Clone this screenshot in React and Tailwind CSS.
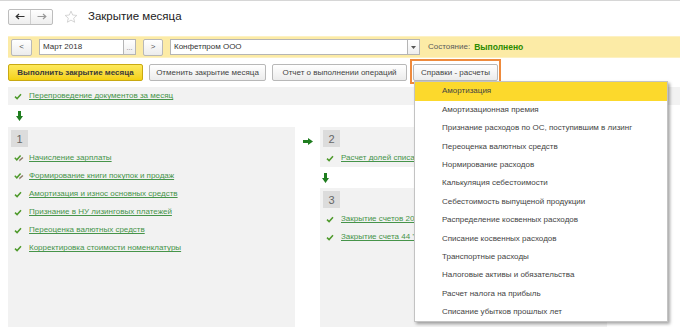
import React from 'react';

const Check = () => (
  <svg width="8" height="7" viewBox="0 0 8 7" className="shrink-0">
    <path d="M1 3.6 L3.1 5.6 L7 1.2" fill="none" stroke="#4f9a2c" strokeWidth="1.5" />
  </svg>
);

const CheckPencil = () => (
  <svg width="10" height="8" viewBox="0 0 10 8" className="shrink-0">
    <path d="M0.8 3.8 L2.8 5.8 L6.6 1.4" fill="none" stroke="#4f9a2c" strokeWidth="1.5" />
    <path d="M5 7.4 L5.6 5.6 L8.4 3 L9.4 4 L6.6 6.6 Z" fill="#8a7a66" />
  </svg>
);

const ArrowDown = () => (
  <svg width="7" height="10" viewBox="0 0 7 10">
    <path d="M2 0 H5 V5 H7 L3.5 10 L0 5 H2 Z" fill="#1f7d1f" />
  </svg>
);

const ArrowRight = () => (
  <svg width="10" height="7" viewBox="0 0 10 7">
    <path d="M0 2 H5 V0 L10 3.5 L5 7 V5 H0 Z" fill="#1f7d1f" />
  </svg>
);

const Item = ({ text, pencil }) => (
  <div className="flex items-center h-[18px]">
    <div className="w-[21px] pl-[6px] flex items-center">{pencil ? <CheckPencil /> : <Check />}</div>
    <span className="text-[8px] text-[#46944a] underline underline-offset-1 whitespace-nowrap">{text}</span>
  </div>
);

const NumBox = ({ n }) => (
  <div className="ml-[3px] mt-[3px] w-[17px] h-[17px] bg-[#dcdcdc] flex items-center justify-center text-[11px] text-[#666]">{n}</div>
);

const menu = [
  'Амортизация',
  'Амортизационная премия',
  'Признание расходов по ОС, поступившим в лизинг',
  'Переоценка валютных средств',
  'Нормирование расходов',
  'Калькуляция себестоимости',
  'Себестоимость выпущеной продукции',
  'Распределение косвенных расходов',
  'Списание косвенных расходов',
  'Транспортные расходы',
  'Налоговые активы и обязательства',
  'Расчет налога на прибыль',
  'Списание убытков прошлых лет',
];

const btn = 'h-[17px] rounded-[2px] border border-[#b8b8b8] bg-gradient-to-b from-white to-[#ececec] text-[8px] text-[#444] flex items-center justify-center shrink-0';

export default function App() {
  return (
    <div className="w-[680px] h-[327px] overflow-hidden bg-white text-[#333] font-['Liberation_Sans',Arial,sans-serif]">
      <div className="h-px bg-[#d6d6d6]" />

      {/* header */}
      <div className="flex items-center pl-2 pt-[7px]">
        <div className="flex h-[16px] border border-[#bdbdbd] rounded-[2px] bg-gradient-to-b from-white to-[#eeeeee]">
          <div className="w-[22px] flex items-center justify-center border-r border-[#cfcfcf]">
            <svg width="10" height="7" viewBox="0 0 10 7"><path d="M9.5 3.5 H1.5 M4 1 L1.2 3.5 L4 6" fill="none" stroke="#333" strokeWidth="1.2" /></svg>
          </div>
          <div className="w-[21px] flex items-center justify-center">
            <svg width="10" height="7" viewBox="0 0 10 7"><path d="M0.5 3.5 H8.5 M6 1 L8.8 3.5 L6 6" fill="none" stroke="#999" strokeWidth="1.2" /></svg>
          </div>
        </div>
        <svg width="14" height="14" viewBox="0 0 24 24" className="ml-[11px]">
          <path d="M12 2 L14.9 8.6 L22 9.3 L16.6 14 L18.2 21 L12 17.3 L5.8 21 L7.4 14 L2 9.3 L9.1 8.6 Z" fill="none" stroke="#c8c8c8" strokeWidth="1.3" strokeLinejoin="round" />
        </svg>
        <span className="ml-[10px] text-[11.5px] text-[#222]">Закрытие месяца</span>
      </div>

      {/* yellow bar */}
      <div className="ml-2 mt-[11px] h-[22px] bg-[#fcebA6] border-y border-[#fdf1c2] flex items-center pl-[3px]">
        <div className={`${btn} w-[21px] h-[16px] text-[#555]`}>&lt;</div>
        <div className="ml-[7px] flex h-[16px]">
          <div className="w-[85px] bg-white border border-[#b5b5b5] flex items-center pl-[3px] text-[8px] text-[#333]">Март 2018</div>
          <div className="w-[12px] bg-gradient-to-b from-white to-[#eee] border border-l-0 border-[#b5b5b5] flex items-end justify-center pb-[3px] text-[7px] leading-none text-[#777]">...</div>
        </div>
        <div className={`${btn} ml-[7px] w-[20px] h-[16px] text-[#555]`}>&gt;</div>
        <div className="ml-[7px] flex h-[16px]">
          <div className="w-[238px] bg-white border border-[#b5b5b5] flex items-center pl-[3px] text-[8px] text-[#333]">Конфетпром ООО</div>
          <div className="w-[12px] bg-gradient-to-b from-white to-[#eee] border border-l-0 border-[#b5b5b5] flex items-center justify-center">
            <svg width="5" height="3" viewBox="0 0 5 3"><path d="M0 0 H5 L2.5 3 Z" fill="#555" /></svg>
          </div>
        </div>
        <span className="ml-[8px] text-[8px] text-[#5a5a5a]">Состояние:</span>
        <span className="ml-[4px] text-[8.5px] font-bold text-[#2c8a00]">Выполнено</span>
      </div>

      {/* buttons */}
      <div className="ml-2 mt-[6px] flex items-center">
        <div className="w-[135px] h-[17px] rounded-[2px] border border-[#c9a912] bg-gradient-to-b from-[#fde95a] to-[#f4d10d] text-[8px] font-bold text-[#3a3a3a] flex items-center justify-center">Выполнить закрытие месяца</div>
        <div className={`${btn} ml-[6px] w-[117px]`}>Отменить закрытие месяца</div>
        <div className={`${btn} ml-[6px] w-[135px]`}>Отчет о выполнении операций</div>
        <div className="relative ml-[6px]">
          <div className={`${btn} w-[85px]`}>Справки - расчеты</div>
          <div className="absolute -left-[3px] -top-[5px] w-[91px] h-[25px] border-2 border-[#ee8a3c] pointer-events-none" />
          <div className="absolute left-[1px] top-[17px] w-[254px] h-[241px] bg-white border border-[#c3c3c3] shadow-[2px_2px_3px_rgba(0,0,0,0.35)] z-10">
            {menu.map((m, i) => (
              <div key={m} className={`h-[18.4px] flex items-center pl-[27px] text-[8px] text-[#444] whitespace-nowrap ${i === 0 ? 'bg-[#fcd92c]' : ''}`}>{m}</div>
            ))}
          </div>
        </div>
      </div>

      {/* reposting row */}
      <div className="ml-2 mt-[6px] h-[18px] bg-[#f2f2f2] flex items-center">
        <div className="w-[21px] pl-[6px] flex items-center"><Check /></div>
        <span className="text-[8px] text-[#46944a] underline underline-offset-1">Перепроведение документов за месяц</span>
      </div>
      <div className="ml-2 h-[22px] flex items-center pl-[8px]"><ArrowDown /></div>

      {/* panels */}
      <div className="ml-2 flex h-[200px]">
        <div className="w-[287px] bg-[#f2f2f2]">
          <NumBox n="1" />
          <div className="mt-[2px]">
            <Item text="Начисление зарплаты" pencil />
            <Item text="Формирование книги покупок и продаж" pencil />
            <Item text="Амортизация и износ основных средств" />
            <Item text="Признание в НУ лизинговых платежей" />
            <Item text="Переоценка валютных средств" />
            <Item text="Корректировка стоимости номенклатуры" />
          </div>
        </div>
        <div className="w-[25px] pt-[11px] flex justify-center"><ArrowRight /></div>
        <div className="w-[287px] flex flex-col">
          <div className="h-[40px] bg-[#f2f2f2]">
            <NumBox n="2" />
            <div className="mt-[2px]">
              <Item text="Расчет долей списания косвенных расходов" />
            </div>
          </div>
          <div className="h-[21px] flex items-center pl-[2px]"><ArrowDown /></div>
          <div className="flex-1 bg-[#f2f2f2]">
            <NumBox n="3" />
            <div className="mt-[2px]">
              <Item text="Закрытие счетов 20, 23, 25, 26" />
              <Item text="Закрытие счета 44 &quot;Издержки обращения&quot;" />
            </div>
          </div>
        </div>
      </div>
    </div>
  );
}
